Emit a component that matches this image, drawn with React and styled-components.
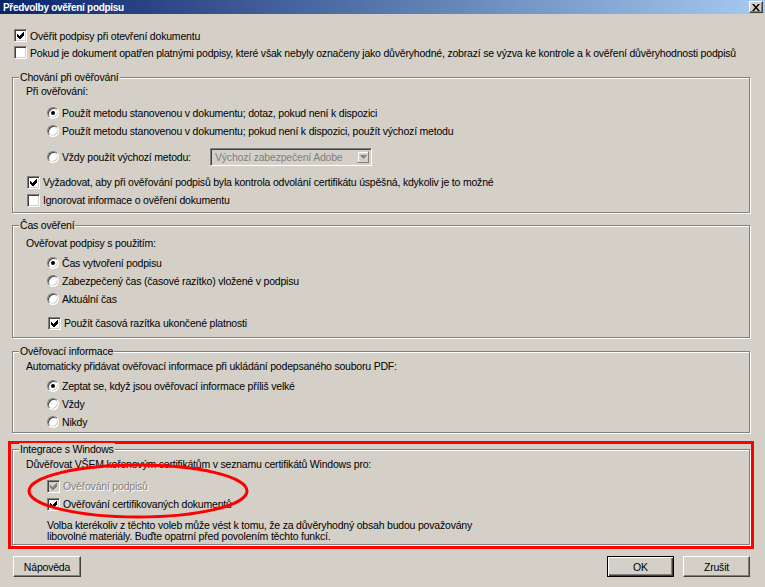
import React from "react"
import styled, { createGlobalStyle } from "styled-components"

const GlobalStyle = createGlobalStyle`
  html, body {
    margin: 0;
    padding: 0;
    background: #D4D0C8;
  }
  body {
    font-family: "Liberation Sans", Arial, sans-serif;
    font-size: 10.5px;
    letter-spacing: -0.2px;
    color: #000;
  }
`

const Dialog = styled.div`
    width: 765px;
    height: 587px;
    background: #D4D0C8;
    display: flex;
    flex-direction: column;
    overflow: hidden;
`
const TitleBar = styled.div`
    height: 14px;
    flex: none;
    display: flex;
    align-items: center;
    justify-content: space-between;
    padding: 0 2px 0 3px;
    background: linear-gradient(to right, #0A246A, #A6CAF0);
`
const TitleText = styled.div`
    color: #fff;
    font-weight: bold;
    font-size: 10px;
    letter-spacing: -0.3px;
`
const CloseButton = styled.div`
    width: 14px;
    height: 12px;
    box-sizing: border-box;
    background: #D4D0C8;
    border: 1px solid;
    border-color: #fff #404040 #404040 #fff;
    box-shadow: inset -1px -1px 0 #808080;
    display: flex;
    align-items: center;
    justify-content: center;
`
const Content = styled.div`
    padding: 0 15px 0 12px;
    display: flex;
    flex-direction: column;
`
const Row = styled.div`
    display: flex;
    align-items: center;
    gap: 3px;
    height: ${p => p.$h || 18}px;
    margin-top: ${p => p.$mt || 0}px;
    padding-left: ${p => p.$indent || 0}px;
    white-space: nowrap;
`
const Group = styled.div`
    position: relative;
    margin-top: ${p => p.$mt || 0}px;
    padding: ${p => p.$pt || 0}px 0 ${p => p.$pb || 0}px;
    border: 1px solid #808080;
    box-shadow: 1px 1px 0 #fff, inset 1px 1px 0 #fff;
`
const GroupTitle = styled.span`
    position: absolute;
    top: -7px;
    left: 6px;
    padding: 0 1px;
    line-height: 13px;
    background: #D4D0C8;
`
const Box = styled.span`
    width: 13px;
    height: 13px;
    flex: none;
    box-sizing: border-box;
    background: ${p => p.$disabled ? "#D4D0C8" : "#fff"};
    border: 1px solid;
    border-color: #808080 #fff #fff #808080;
    box-shadow: inset 1px 1px 0 #404040, inset -1px -1px 0 #D4D0C8;
    display: flex;
    align-items: center;
    justify-content: center;
`
const RadioCircle = styled.span`
    width: 12px;
    height: 12px;
    flex: none;
    box-sizing: border-box;
    border-radius: 50%;
    background: #fff;
    border: 1px solid;
    border-color: #808080 #fff #fff #808080;
    box-shadow: inset 1px 1px 0 #404040, inset -1px -1px 0 #D4D0C8;
    display: flex;
    align-items: center;
    justify-content: center;
    &::after {
        content: "";
        width: 4px;
        height: 4px;
        border-radius: 50%;
        background: #000;
        display: ${p => p.$on ? "block" : "none"};
    }
`
const Label = styled.span`
    color: ${p => p.$disabled ? "#808080" : "#000"};
    text-shadow: ${p => p.$disabled ? "1px 1px 0 #fff" : "none"};
    width: ${p => p.$w ? p.$w + "px" : "auto"};
`
const Select = styled.div`
    width: 162px;
    height: 18px;
    box-sizing: border-box;
    display: flex;
    align-items: center;
    padding: 2px;
    border: 1px solid;
    border-color: #808080 #fff #fff #808080;
    box-shadow: inset 1px 1px 0 #404040, inset -1px -1px 0 #D4D0C8;
    color: #808080;
`
const SelectText = styled.span`
    flex: 1;
    padding-left: 2px;
`
const SelectArrow = styled.span`
    width: 12px;
    height: 12px;
    box-sizing: border-box;
    border: 1px solid;
    border-color: #D4D0C8 #808080 #808080 #D4D0C8;
    box-shadow: inset 1px 1px 0 #fff;
    display: flex;
    align-items: center;
    justify-content: center;
`
const Highlight = styled.div`
    position: relative;
    margin: 8px -4px 0;
    padding: 5px 1px 1px;
    border: 3px solid #FF0000;
`
const Ellipse = styled.svg`
    position: absolute;
    left: 0;
    top: 0;
    overflow: visible;
    pointer-events: none;
`
const Note = styled.div`
    margin-top: 7px;
    padding-left: 34px;
    line-height: 11px;
`
const ButtonBar = styled.div`
    display: flex;
    gap: 9px;
    margin-top: 7px;
    padding-left: 1px;
`
const Button = styled.button`
    width: ${p => p.$w || 67}px;
    height: 21px;
    margin-right: ${p => p.$push ? "auto" : "0"};
    padding: 0;
    font-family: inherit;
    font-size: 10.5px;
    letter-spacing: -0.2px;
    color: #000;
    background: #D4D0C8;
    border: 1px solid;
    border-color: ${p => p.$default ? "#000" : "#fff #404040 #404040 #fff"};
    box-shadow: ${p => p.$default
        ? "inset 1px 1px 0 #fff, inset -1px -1px 0 #404040, inset -2px -2px 0 #808080"
        : "inset -1px -1px 0 #808080"};
`

const CheckMark = ({ color }) => (
    <svg width="7" height="7" viewBox="0 0 7 7" shapeRendering="crispEdges">
        <path d="M0 2 L2 4 L6 0 L7 0 L7 3 L3 7 L2 7 L0 5 Z" fill={color} />
    </svg>
)

const Check = ({ on, disabled }) => (
    <Box $disabled={disabled}>{on && <CheckMark color={disabled ? "#808080" : "#000"} />}</Box>
)

const Radio = ({ on }) => <RadioCircle $on={on} />

export default function App() {
    return (
        <Dialog>
            <GlobalStyle />
            <TitleBar>
                <TitleText>Předvolby ověření podpisu</TitleText>
                <CloseButton>
                    <svg width="8" height="7" viewBox="0 0 8 7">
                        <path d="M0 0 L2 0 L4 2.5 L6 0 L8 0 L5 3.5 L8 7 L6 7 L4 4.5 L2 7 L0 7 L3 3.5 Z" fill="#000" />
                    </svg>
                </CloseButton>
            </TitleBar>
            <Content>
                <Row $h={17} $mt={13} $indent={2}>
                    <Check on /><Label>Ověřit podpisy při otevření dokumentu</Label>
                </Row>
                <Row $h={17} $indent={2}>
                    <Check /><Label>Pokud je dokument opatřen platnými podpisy, které však nebyly označeny jako důvěryhodné, zobrazí se výzva ke kontrole a k ověření důvěryhodnosti podpisů</Label>
                </Row>

                <Group $mt={16} $pt={4} $pb={3}>
                    <GroupTitle>Chování při ověřování</GroupTitle>
                    <Row $indent={13}><Label>Při ověřování:</Label></Row>
                    <Row $mt={4} $indent={34}>
                        <Radio on /><Label>Použít metodu stanovenou v dokumentu; dotaz, pokud není k dispozici</Label>
                    </Row>
                    <Row $indent={34}>
                        <Radio /><Label>Použít metodu stanovenou v dokumentu; pokud není k dispozici, použít výchozí metodu</Label>
                    </Row>
                    <Row $h={20} $mt={7} $indent={34}>
                        <Radio /><Label $w={145}>Vždy použít výchozí metodu:</Label>
                        <Select>
                            <SelectText>Výchozí zabezpečení Adobe</SelectText>
                            <SelectArrow>
                                <svg width="7" height="4" viewBox="0 0 7 4"><path d="M0 0 H7 L3.5 4 Z" fill="#808080" /></svg>
                            </SelectArrow>
                        </Select>
                    </Row>
                    <Row $mt={6} $indent={14}>
                        <Check on /><Label>Vyžadovat, aby při ověřování podpisů byla kontrola odvolání certifikátu úspěšná, kdykoliv je to možné</Label>
                    </Row>
                    <Row $indent={14}>
                        <Check /><Label>Ignorovat informace o ověření dokumentu</Label>
                    </Row>
                </Group>

                <Group $mt={12} $pt={8} $pb={5}>
                    <GroupTitle>Čas ověření</GroupTitle>
                    <Row $indent={13}><Label>Ověřovat podpisy s použitím:</Label></Row>
                    <Row $mt={2} $indent={34}><Radio on /><Label>Čas vytvoření podpisu</Label></Row>
                    <Row $indent={34}><Radio /><Label>Zabezpečený čas (časové razítko) vložené v podpisu</Label></Row>
                    <Row $indent={34}><Radio /><Label>Aktuální čas</Label></Row>
                    <Row $mt={6} $indent={35}><Check on /><Label>Použít časová razítka ukončené platnosti</Label></Row>
                </Group>

                <Group $mt={13} $pt={5} $pb={1}>
                    <GroupTitle>Ověřovací informace</GroupTitle>
                    <Row $indent={13}><Label>Automaticky přidávat ověřovací informace při ukládání podepsaného souboru PDF:</Label></Row>
                    <Row $mt={2} $indent={34}><Radio on /><Label>Zeptat se, když jsou ověřovací informace příliš velké</Label></Row>
                    <Row $indent={34}><Radio /><Label>Vždy</Label></Row>
                    <Row $indent={34}><Radio /><Label>Nikdy</Label></Row>
                </Group>

                <Highlight>
                    <Group $pt={5} $pb={2}>
                        <GroupTitle>Integrace s Windows</GroupTitle>
                        <Row $indent={13}><Label>Důvěřovat VŠEM kořenovým certifikátům v seznamu certifikátů Windows pro:</Label></Row>
                        <Row $mt={4} $indent={34}><Check on disabled /><Label $disabled>Ověřování podpisů</Label></Row>
                        <Row $indent={34}><Check on /><Label>Ověřování certifikovaných dokumentů</Label></Row>
                        <Note>
                            Volba kterékoliv z těchto voleb může vést k tomu, že za důvěryhodný obsah budou považovány<br />
                            libovolné materiály. Buďte opatrní před povolením těchto funkcí.
                        </Note>
                    </Group>
                    <Ellipse width="240" height="100">
                        <ellipse cx="127" cy="47" rx="109" ry="26" fill="none" stroke="#FF0000" strokeWidth="3" />
                    </Ellipse>
                </Highlight>

                <ButtonBar>
                    <Button $w={68} $push>Nápověda</Button>
                    <Button $default>OK</Button>
                    <Button>Zrušit</Button>
                </ButtonBar>
            </Content>
        </Dialog>
    )
}
